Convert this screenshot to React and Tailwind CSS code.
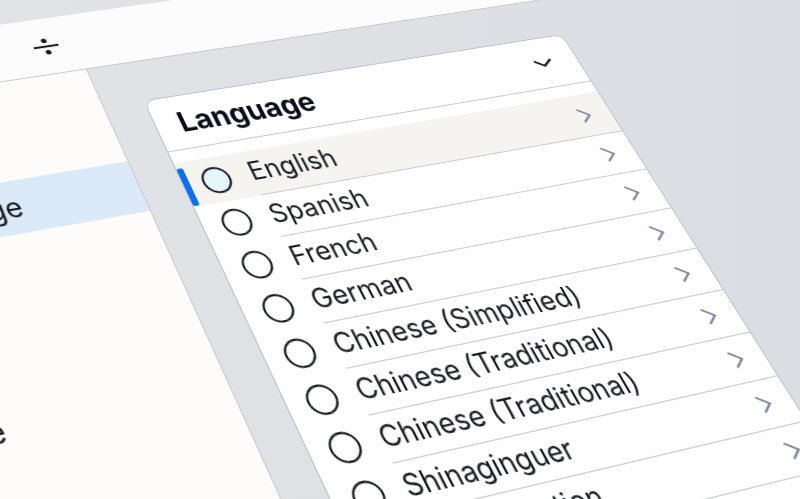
import { } from 'react'

// stage coords of the panel, and where its corners land in the photo
const PANEL = { x: 440, y: 149, w: 440, h: 372 }
const CORNERS = [[143, 100.5], [562, 34], [778, 375], [320, 479]]

// homography: panel rect -> photographed quad, as a css matrix3d
function perspective({ x, y, w, h }, q) {
  const [[x0, y0], [x1, y1], [x2, y2], [x3, y3]] = q
  const sx = x0 - x1 + x2 - x3
  const sy = y0 - y1 + y2 - y3
  const dx1 = x1 - x2
  const dx2 = x3 - x2
  const dy1 = y1 - y2
  const dy2 = y3 - y2
  const den = dx1 * dy2 - dx2 * dy1
  const g = (sx * dy2 - dx2 * sy) / den
  const k = (dx1 * sy - sx * dy1) / den
  // unit square -> quad
  const a = x1 - x0 + g * x1
  const b = x3 - x0 + k * x3
  const d = y1 - y0 + g * y1
  const e = y3 - y0 + k * y3
  // stage -> unit square
  const A = a / w, B = b / h, D = d / w, E = e / h, G = g / w, H = k / h
  const C = x0 - A * x - B * y
  const F = y0 - D * x - E * y
  const I = 1 - G * x - H * y
  return `matrix3d(${A},${D},0,${G},${B},${E},0,${H},0,0,1,0,${C},${F},0,${I})`
}

const LANGUAGES = [
  'Spanish',
  'French',
  'German',
  'Chinese (Simplified)',
  'Chinese (Traditional)',
  'Chinese (Traditional)',
  'Shinaginguer',
  'Classification',
]

function Chevron() {
  return (
    <svg width="14" height="18" viewBox="0 0 14 18" fill="none" aria-hidden className="mr-[20px] shrink-0">
      <path d="M1.5 1.5 11.5 9.3 2.5 16" stroke="#7d8398" strokeWidth="2" />
    </svg>
  )
}

function Radio({ active }) {
  return (
    <span className={`size-[27px] shrink-0 rounded-full border-2 border-[#14181f] ${active ? 'bg-[#e4f6fa]' : 'bg-white'}`} />
  )
}

function Row({ label, active }) {
  return (
    <div className={`relative flex items-center pl-[18px] ${active ? 'h-[46px] bg-[#f5f4f0]' : 'h-[43px]'}`}>
      {active && <span className="absolute left-0 top-[6px] bottom-[1px] w-[6px] rounded-[2px] bg-[#0b6ff2]" />}
      <Radio active={active} />
      <div className="ml-[19px] flex h-full flex-1 items-center justify-between border-b border-[#c9cad4]">
        <span className="-mt-[2px] text-[25px] leading-none text-[#171b22]">{label}</span>
        <Chevron />
      </div>
    </div>
  )
}

function Panel() {
  return (
    <div className="h-[560px] w-[440px] rounded-[11px] border border-[#bcbfcc] bg-white">
      <div className="flex h-[56px] items-center justify-between border-b border-[#c5c7d0] pl-[22px] pr-[26px]">
        <span className="text-[28px] font-bold leading-none text-[#0a0e1a]">Language</span>
        <svg width="20" height="10" viewBox="0 0 20 10" fill="none" aria-hidden>
          <path d="M1 1.5 9.6 8 19 1.5" stroke="#141925" strokeWidth="2.2" />
        </svg>
      </div>
      <div className="pt-[12px]">
        <Row label="English" active />
        {LANGUAGES.map((l, i) => <Row key={i} label={l} />)}
      </div>
    </div>
  )
}

function Sidebar() {
  return (
    <div className="h-[700px] w-[402px] shrink-0 border-r border-[#c9ccd4] bg-[#fdfcfa] pt-[101px] text-[26px] text-[#171b22]">
      <div className="flex h-[52px] items-center bg-[#dce9f8] pl-[171px]">Language</div>
      <div className="mt-[149px] pl-[112px]">Storage</div>
    </div>
  )
}

export default function App() {
  return (
    <div className="relative h-[499px] w-[800px] overflow-hidden bg-linear-to-r from-[#e2e3e6] to-[#dadde2] font-['Inter',sans-serif]">
      <div
        className="absolute left-0 top-0 h-[800px] w-[1500px] origin-top-left blur-[0.25px]"
        style={{ transform: perspective(PANEL, CORNERS) }}
      >
        <div className="h-[45px]" />
        <div className="flex h-[62px] items-center border-b border-[#c5c8cf] bg-[#fcfcfc] pl-[361px]">
          <svg width="26" height="20" viewBox="0 0 26 20" fill="none" aria-hidden>
            <circle cx="13" cy="3.5" r="2.6" fill="#14181f" />
            <path d="M1 10h24" stroke="#14181f" strokeWidth="2.2" />
            <circle cx="13" cy="16.5" r="2.6" fill="#14181f" />
          </svg>
        </div>
        <div className="flex">
          <Sidebar />
          <div className="pl-[38px] pt-[42px]">
            <Panel />
          </div>
        </div>
      </div>
    </div>
  )
}
